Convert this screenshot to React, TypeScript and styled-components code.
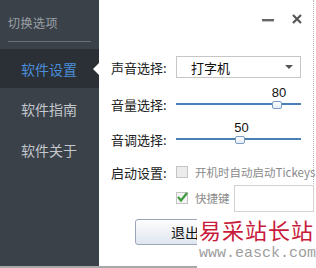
import React from 'react';
import styled, { createGlobalStyle } from 'styled-components';

const GlobalStyle = createGlobalStyle`
  html, body {
    margin: 0;
    padding: 0;
    background: #ffffff;
  }
  body {
    font-family: "Noto Sans CJK SC", "Liberation Sans", sans-serif;
  }
`;

const Window = styled.div`
  width: 316px;
  height: 268px;
  display: flex;
  position: relative;
  overflow: hidden;
  background: #fff;
`;

const Sidebar = styled.aside`
  width: 99px;
  flex-shrink: 0;
  background: #3b4149;
  display: flex;
  flex-direction: column;
`;

const SideTitle = styled.div`
  height: 42px;
  margin: 0 8px;
  border-bottom: 1px solid #6a7078;
  box-sizing: border-box;
  color: #9ba1a8;
  font-size: 12px;
  line-height: 46px;
  letter-spacing: 0.5px;
`;

const NavList = styled.nav`
  margin-top: 7px;
  display: flex;
  flex-direction: column;
`;

const NavItem = styled.div<{ $active?: boolean }>`
  position: relative;
  height: ${(p) => (p.$active ? 39 : 41)}px;
  padding-left: 21px;
  display: flex;
  align-items: center;
  font-size: 14px;
  color: ${(p) => (p.$active ? '#4a8ed8' : '#c3c7cc')};
  background: ${(p) => (p.$active ? '#2b3036' : 'transparent')};
  &::after {
    content: '';
    display: ${(p) => (p.$active ? 'block' : 'none')};
    position: absolute;
    right: 0;
    top: 14px;
    border-style: solid;
    border-width: 6px 6px 6px 0;
    border-color: transparent #ffffff transparent transparent;
  }
`;

const Main = styled.main`
  width: 215px;
  border-right: 1px dotted #b8b8b8;
  display: flex;
  flex-direction: column;
  padding-left: 12px;
  box-sizing: border-box;
`;

const TitleBar = styled.div`
  height: 55px;
  display: flex;
  justify-content: flex-end;
  align-items: flex-start;
  gap: 17px;
  padding: 12px 10px 0 0;
  box-sizing: border-box;
`;

const WinButton = styled.div`
  width: 12px;
  height: 14px;
  display: flex;
  align-items: center;
  justify-content: center;
  color: #5a5a5a;
`;

const Row = styled.div<{ $h: number; $indent?: number; $top?: number }>`
  height: ${(p) => p.$h}px;
  margin-top: ${(p) => p.$top ?? 0}px;
  padding-left: ${(p) => p.$indent ?? 0}px;
  display: flex;
  align-items: center;
  white-space: nowrap;
`;

const Label = styled.div`
  width: 65px;
  flex-shrink: 0;
  font-size: 13px;
  color: #222;
`;

const Select = styled.div`
  width: 125px;
  height: 22px;
  border: 1px solid #c6c6c6;
  box-sizing: border-box;
  display: flex;
  align-items: center;
  justify-content: space-between;
  padding: 0 7px 0 14px;
  font-size: 13px;
  color: #111;
`;

const Caret = styled.span`
  width: 0;
  height: 0;
  border-left: 4px solid transparent;
  border-right: 4px solid transparent;
  border-top: 4px solid #555;
`;

const SliderBox = styled.div`
  position: relative;
  width: 125px;
  height: 8px;
  display: flex;
  align-items: center;
`;

const Track = styled.div`
  width: 100%;
  height: 2px;
  background: #4b7fb6;
`;

const Thumb = styled.div`
  position: absolute;
  top: 1px;
  width: 8px;
  height: 6px;
  margin-left: -4px;
  border: 1px solid #7a9cc4;
  border-radius: 2px;
  background: linear-gradient(#ffffff, #e4ecf5);
`;

const ThumbValue = styled.div`
  position: absolute;
  top: -15px;
  width: 30px;
  margin-left: -12px;
  text-align: center;
  font-family: "Liberation Sans", sans-serif;
  font-size: 13px;
  color: #111;
`;

const Check = styled.div<{ $on?: boolean }>`
  width: 12px;
  height: 12px;
  border: 1px solid #c4c4c4;
  background: ${(p) => (p.$on ? '#f4f4f4' : '#ececec')};
  box-sizing: border-box;
  margin-right: 7px;
  flex-shrink: 0;
  position: relative;
`;

const CheckLabel = styled.span`
  font-size: 11.5px;
  color: #8a8a8a;
  flex-shrink: 0;
`;

const KeyInput = styled.div`
  width: 80px;
  height: 27px;
  flex-shrink: 0;
  border: 1px solid #d2d2d2;
  box-sizing: border-box;
  margin-left: 4px;
`;

const ExitButton = styled.button`
  margin: 11px 0 0 24px;
  width: 100px;
  height: 26px;
  border: 1px solid #9ba7b8;
  border-radius: 3px;
  background: linear-gradient(#fdfdfd, #dfe6ef);
  font-family: "Noto Sans CJK SC", sans-serif;
  font-size: 14px;
  color: #111;
  padding: 0;
`;

const BottomStrip = styled.div`
  position: absolute;
  left: 0;
  bottom: 0;
  width: 197px;
  height: 2px;
  background: #a9a9a9;
`;

const Watermark = styled.div`
  position: absolute;
  left: 197px;
  top: 213px;
  right: 0;
  bottom: 0;
  background: #fff;
  display: flex;
  flex-direction: column;
  padding-left: 2px;
`;

const MarkTitle = styled.div`
  font-family: "Noto Sans CJK SC", serif;
  font-size: 22px;
  color: #c81a3a;
  letter-spacing: 1px;
  line-height: 32px;
`;

const MarkUrl = styled.div`
  font-family: "Liberation Mono", monospace;
  font-size: 15px;
  color: #9e9e9e;
  line-height: 18px;
`;

const Slider: React.FC<{ value: number }> = ({ value }) => (
  <SliderBox>
    <Track />
    <Thumb style={{ left: `${value}%` }} />
    <ThumbValue style={{ left: `${value}%` }}>{value}</ThumbValue>
  </SliderBox>
);

export default function App() {
  return (
    <>
      <GlobalStyle />
      <Window>
        <Sidebar>
          <SideTitle>切换选项</SideTitle>
          <NavList>
            <NavItem $active>软件设置</NavItem>
            <NavItem>软件指南</NavItem>
            <NavItem>软件关于</NavItem>
          </NavList>
        </Sidebar>
        <Main>
          <TitleBar>
            <WinButton>
              <svg width="12" height="12" viewBox="0 0 12 12">
                <rect x="0" y="6" width="12" height="2.4" fill="#666" />
              </svg>
            </WinButton>
            <WinButton>
              <svg width="10" height="10" viewBox="0 0 10 10">
                <path d="M1 1 L9 9 M9 1 L1 9" stroke="#555" strokeWidth="2.2" />
              </svg>
            </WinButton>
          </TitleBar>
          <Row $h={24}>
            <Label>声音选择:</Label>
            <Select>
              打字机
              <Caret />
            </Select>
          </Row>
          <Row $h={36} $top={7}>
            <Label>音量选择:</Label>
            <Slider value={80} />
          </Row>
          <Row $h={34}>
            <Label>音调选择:</Label>
            <Slider value={50} />
          </Row>
          <Row $h={32}>
            <Label>启动设置:</Label>
            <Check />
            <CheckLabel>开机时自动启动Tickeys</CheckLabel>
          </Row>
          <Row $h={20} $indent={65}>
            <Check $on>
              <svg width="12" height="12" viewBox="0 0 12 12" style={{ position: 'absolute', left: -1, top: -2 }}>
                <path d="M2 6 L5 9.5 L11 2" stroke="#3f9a3c" strokeWidth="2.2" fill="none" />
              </svg>
            </Check>
            <CheckLabel>快捷键</CheckLabel>
            <KeyInput />
          </Row>
          <ExitButton>退出</ExitButton>
        </Main>
        <BottomStrip />
        <Watermark>
          <MarkTitle>易采站长站</MarkTitle>
          <MarkUrl>www.easck.com</MarkUrl>
        </Watermark>
      </Window>
    </>
  );
}
